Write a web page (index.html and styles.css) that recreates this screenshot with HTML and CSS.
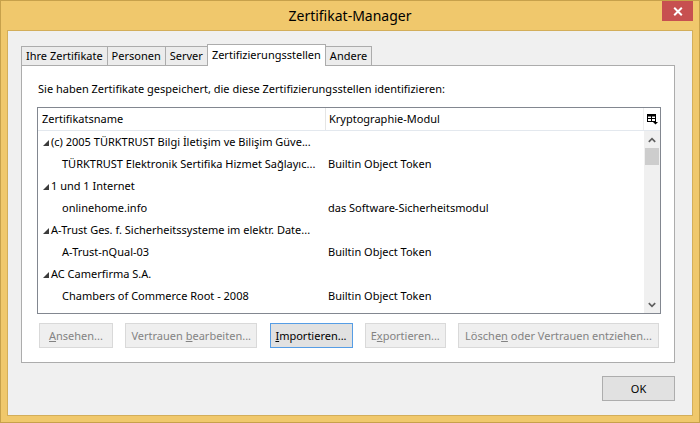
FILE: index.html
```html
<!DOCTYPE html>
<html lang="de">
<head>
<meta charset="utf-8">
<title>Zertifikat-Manager</title>
<link rel="stylesheet" href="styles.css">
</head>
<body>
<div class="window">
  <div class="titlebar">
    <div></div>
    <div class="title">Zertifikat-Manager</div>
    <div class="tb-right">
      <div class="close">
        <svg width="10" height="9" viewBox="0 0 10 9"><path d="M1.2 0.8 L8.8 8.2 M8.8 0.8 L1.2 8.2" stroke="#fff" stroke-width="2" fill="none"/></svg>
      </div>
    </div>
  </div>
  <div class="client">
    <div class="tabs">
      <div class="tab">Ihre Zertifikate</div>
      <div class="tab">Personen</div>
      <div class="tab">Server</div>
      <div class="tab active">Zertifizierungsstellen</div>
      <div class="tab">Andere</div>
    </div>
    <div class="panel">
      <p class="intro">Sie haben Zertifikate gespeichert, die diese Zertifizierungsstellen identifizieren:</p>
      <div class="tree">
        <div class="tree-head">
          <div class="th th-name">Zertifikatsname</div>
          <div class="th th-mod">Kryptographie-Modul</div>
          <div class="th th-pick">
            <svg width="11" height="11" viewBox="0 0 11 11">
              <rect x="0.5" y="0.5" width="8" height="7" fill="none" stroke="#000"/>
              <rect x="0.5" y="0.5" width="8" height="2" fill="#000"/>
              <line x1="4.5" y1="2" x2="4.5" y2="8" stroke="#000"/>
              <line x1="1" y1="4.5" x2="8" y2="4.5" stroke="#000"/>
              <polygon points="6,8 11,8 8.5,10.5" fill="#000"/>
            </svg>
          </div>
        </div>
        <div class="tree-body">
          <div class="rows">
            <div class="row parent">
              <div class="c1"><svg class="twisty" width="6" height="6" viewBox="0 0 6 6"><polygon points="6,0 6,6 0,6" fill="#3c3c3c"/></svg><span class="txt">(c) 2005 TÜRKTRUST Bilgi İletişim ve Bilişim Güve...</span></div>
              <div class="c2"></div>
            </div>
            <div class="row child">
              <div class="c1"><span class="txt">TÜRKTRUST Elektronik Sertifika Hizmet Sağlayıc...</span></div>
              <div class="c2">Builtin Object Token</div>
            </div>
            <div class="row parent">
              <div class="c1"><svg class="twisty" width="6" height="6" viewBox="0 0 6 6"><polygon points="6,0 6,6 0,6" fill="#3c3c3c"/></svg><span class="txt">1 und 1 Internet</span></div>
              <div class="c2"></div>
            </div>
            <div class="row child">
              <div class="c1"><span class="txt">onlinehome.info</span></div>
              <div class="c2">das Software-Sicherheitsmodul</div>
            </div>
            <div class="row parent">
              <div class="c1"><svg class="twisty" width="6" height="6" viewBox="0 0 6 6"><polygon points="6,0 6,6 0,6" fill="#3c3c3c"/></svg><span class="txt">A-Trust Ges. f. Sicherheitssysteme im elektr. Date...</span></div>
              <div class="c2"></div>
            </div>
            <div class="row child">
              <div class="c1"><span class="txt">A-Trust-nQual-03</span></div>
              <div class="c2">Builtin Object Token</div>
            </div>
            <div class="row parent">
              <div class="c1"><svg class="twisty" width="6" height="6" viewBox="0 0 6 6"><polygon points="6,0 6,6 0,6" fill="#3c3c3c"/></svg><span class="txt">AC Camerfirma S.A.</span></div>
              <div class="c2"></div>
            </div>
            <div class="row child">
              <div class="c1"><span class="txt">Chambers of Commerce Root - 2008</span></div>
              <div class="c2">Builtin Object Token</div>
            </div>
          </div>
          <div class="vscroll">
            <div class="sb-btn">
              <svg width="8" height="6" viewBox="0 0 8 6"><path d="M0.8 4.8 L4 1.6 L7.2 4.8" stroke="#606060" stroke-width="1.7" fill="none"/></svg>
            </div>
            <div class="sb-thumb"></div>
            <div class="sb-track"></div>
            <div class="sb-btn">
              <svg width="8" height="6" viewBox="0 0 8 6"><path d="M0.8 1.2 L4 4.4 L7.2 1.2" stroke="#606060" stroke-width="1.7" fill="none"/></svg>
            </div>
          </div>
        </div>
      </div>
      <div class="actions">
        <button class="btn disabled b-view"><u>A</u>nsehen...</button>
        <button class="btn disabled b-trust">Vertrauen <u>b</u>earbeiten...</button>
        <button class="btn default b-import"><u>I</u>mportieren...</button>
        <button class="btn disabled b-export">E<u>x</u>portieren...</button>
        <button class="btn disabled b-delete">Lösche<u>n</u> oder Vertrauen entziehen...</button>
      </div>
    </div>
    <div class="footer">
      <button class="btn b-ok">OK</button>
    </div>
  </div>
</div>
</body>
</html>
```

FILE: styles.css
```css
* { box-sizing: border-box; }
html, body { margin: 0; padding: 0; }
body {
  width: 700px;
  height: 423px;
  overflow: hidden;
  font-family: "Noto Sans", "DejaVu Sans", sans-serif;
  font-size: 11px;
  color: #000;
}
.window {
  width: 700px;
  height: 423px;
  border: 1px solid #c7a14b;
  background: #f0c86c;
  display: flex;
  flex-direction: column;
}
.titlebar {
  height: 29px;
  display: grid;
  grid-template-columns: 1fr auto 1fr;
  align-items: start;
}
.title {
  font-size: 14px;
  line-height: 29px;
  color: #000;
}
.tb-right {
  display: flex;
  justify-content: flex-end;
  padding-right: 6px;
}
.close {
  width: 31px;
  height: 20px;
  background: #c75050;
  display: flex;
  align-items: center;
  justify-content: center;
}
.client {
  margin: 0 6px 6px;
  flex: 1;
  border: 1px solid #d3ae5a;
  background: #f0f0f0;
  padding: 13px 17px 14px 13px;
  display: flex;
  flex-direction: column;
}
.tabs {
  display: flex;
  align-items: flex-end;
  height: 21px;
}
.tab {
  height: 19px;
  border: 1px solid #acacac;
  border-bottom: none;
  margin-left: -1px;
  padding: 0 4px;
  line-height: 18px;
  background: #ececec;
  white-space: nowrap;
}
.tab:first-child { margin-left: 0; }
.tab.active {
  height: 22px;
  margin-bottom: -1px;
  background: #fff;
  line-height: 19px;
  position: relative;
  z-index: 1;
}
.panel {
  height: 298px;
  border: 1px solid #acacac;
  background: #fff;
  padding: 15px 13px 14px 15px;
  display: flex;
  flex-direction: column;
}
.intro {
  margin: 0;
  padding-left: 1px;
  line-height: 15px;
  white-space: nowrap;
}
.tree {
  margin-top: 11px;
  height: 207px;
  border: 1px solid #828790;
  display: flex;
  flex-direction: column;
}
.tree-head {
  display: grid;
  grid-template-columns: 288px 318px 16px;
  height: 23px;
  border-bottom: 1px solid #e3e8ee;
}
.th {
  line-height: 22px;
  white-space: nowrap;
  overflow: hidden;
}
.th-name {
  padding-left: 4px;
  border-right: 1px solid #e5e5e5;
}
.th-mod {
  padding-left: 3px;
  border-right: 1px solid #eeeeee;
}
.th-pick {
  display: flex;
  align-items: center;
  justify-content: center;
  padding-left: 1px;
}
.tree-body {
  flex: 1;
  display: flex;
  overflow: hidden;
}
.rows {
  flex: 1;
  overflow: hidden;
}
.row {
  display: grid;
  grid-template-columns: 288px 1fr;
  height: 22px;
  line-height: 22px;
}
.c1 {
  display: flex;
  align-items: center;
  padding-left: 24px;
  padding-right: 2px;
  min-width: 0;
}
.parent .c1 { padding-left: 5px; }
.twisty {
  flex: none;
  margin-right: 2px;
  margin-top: 1px;
}
.txt {
  white-space: nowrap;
}
.c2 {
  padding-left: 2px;
  white-space: nowrap;
}
.vscroll {
  width: 16px;
  background: #f0f0f0;
  display: flex;
  flex-direction: column;
}
.sb-btn {
  height: 17px;
  display: flex;
  align-items: center;
  justify-content: center;
}
.sb-thumb {
  height: 17px;
  margin: 0 1px;
  background: #cdcdcd;
}
.sb-track { flex: 1; }
.actions {
  margin-top: 9px;
  padding: 0 2px;
  display: flex;
  justify-content: space-between;
}
.btn {
  height: 25px;
  padding: 0;
  margin: 0;
  font-family: "Noto Sans", "DejaVu Sans", sans-serif;
  font-size: 11px;
  line-height: 23px;
  text-align: center;
  color: #000;
  background: #e1e1e1;
  border: 1px solid #adadad;
  border-radius: 0;
  white-space: nowrap;
}
.btn u { text-underline-offset: 1px; }
.btn.disabled {
  background: #efefef;
  border-color: #d9d9d9;
  color: #838383;
}
.btn.default { border-color: #569de5; }
.b-view { width: 74px; }
.b-trust { width: 132px; }
.b-import { width: 83px; }
.b-export { width: 81px; }
.b-delete { width: 201px; }
.footer {
  margin-top: 13px;
  display: flex;
  justify-content: flex-end;
}
.b-ok { width: 73px; }
```
